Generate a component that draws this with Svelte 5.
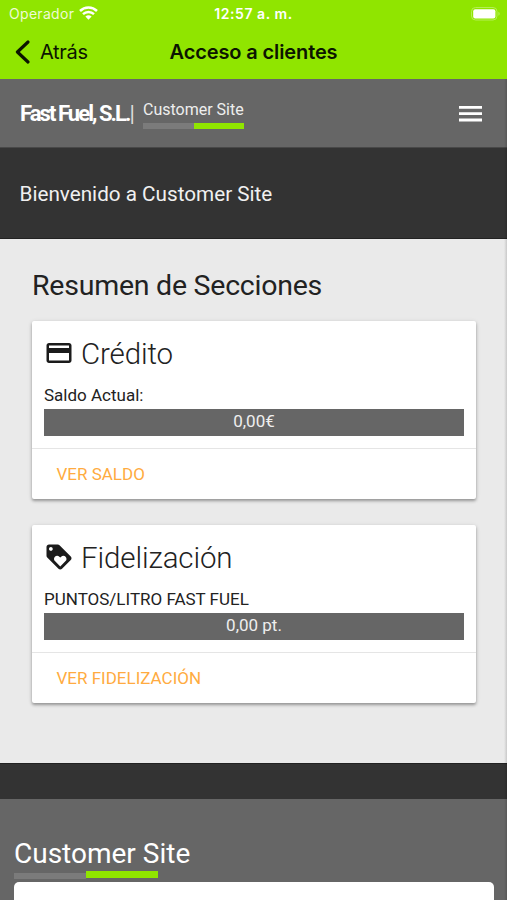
<script>
  const sections = [
    {
      title: 'Crédito',
      icon: 'M20 4H4c-1.11 0-1.99.89-1.99 2L2 18c0 1.11.89 2 2 2h16c1.11 0 2-.89 2-2V6c0-1.11-.89-2-2-2zm0 14H4v-6h16v6zm0-10H4V6h16v2z',
      label: 'Saldo Actual:',
      value: '0,00€',
      action: 'VER SALDO'
    },
    {
      title: 'Fidelización',
      icon: 'M21.41 11.58l-9-9C12.05 2.22 11.55 2 11 2H4c-1.1 0-2 .9-2 2v7c0 .55.22 1.05.59 1.42l9 9c.36.36.86.58 1.41.58.55 0 1.05-.22 1.41-.59l7-7c.37-.36.59-.86.59-1.41 0-.55-.23-1.06-.59-1.42zM5.5 7C4.67 7 4 6.33 4 5.5S4.67 4 5.5 4 7 4.67 7 5.5 6.33 7 5.5 7zm11.77 8.27L13 19.54l-4.27-4.27C8.28 14.81 8 14.19 8 13.5c0-1.38 1.12-2.5 2.5-2.5.69 0 1.32.28 1.77.74l.73.72.73-.73c.45-.45 1.08-.73 1.77-.73 1.38 0 2.5 1.12 2.5 2.5 0 .69-.28 1.32-.73 1.77z',
      label: 'PUNTOS/LITRO FAST FUEL',
      value: '0,00 pt.',
      action: 'VER FIDELIZACIÓN'
    }
  ];
</script>

<div class="screen">
  <div class="status">
    <div class="carrier">
      <span>Operador</span>
      <svg width="19" height="14" viewBox="0 0 19 14" fill="none" stroke="#fff">
        <path d="M1 5a12.2 12.2 0 0 1 17 0" stroke-width="2.5" />
        <path d="M4 8.2a7.9 7.9 0 0 1 11 0" stroke-width="2.4" />
        <path d="M9.5 13.8 6.4 10.6a4.6 4.6 0 0 1 6.2 0z" fill="#fff" stroke="none" />
      </svg>
    </div>
    <span class="time">12:57 a. m.</span>
    <svg class="battery" width="30" height="14" viewBox="0 0 30 14">
      <rect x=".5" y=".5" width="25.5" height="12.5" rx="4" fill="none" stroke="#b4ef55" />
      <rect x="2.2" y="2.2" width="22.2" height="9.2" rx="2" fill="#fff" />
      <path d="M27.4 4.8a2.2 2.2 0 0 1 0 4z" fill="#b4ef55" />
    </svg>
  </div>
  <nav class="navbar">
    <div class="back">
      <svg width="15" height="24" viewBox="0 0 15 24" fill="none" stroke="#0c1500" stroke-width="3.1" stroke-linecap="round" stroke-linejoin="round"><path d="M13 2 2.4 12 13 22" /></svg>
      <span>Atrás</span>
    </div>
    <h1>Acceso a clientes</h1>
  </nav>

  <div class="page">
    <header>
      <div class="brand"><b>Fast Fuel, S.L.</b><i>|</i></div>
      <div class="site"><span>Customer Site</span><div class="stripe"></div></div>
      <svg class="menu" width="23" height="16" viewBox="0 0 23 16" fill="#fff"><path d="M0 0h23v2.8H0zM0 6.3h23v2.8H0zM0 12.6h23v2.8H0z" /></svg>
    </header>
    <div class="welcome"><span>Bienvenido a Customer Site</span></div>
    <main>
      <h2>Resumen de Secciones</h2>
      {#each sections as s}
        <section>
          <div class="content">
            <h3>
              <svg width="30" height="30" viewBox="0 0 24 24" fill="#1b1b1b"><path d={s.icon} /></svg>
              <span>{s.title}</span>
            </h3>
            <p>{s.label}</p>
            <div class="value"><span>{s.value}</span></div>
          </div>
          <div class="action"><span>{s.action}</span></div>
        </section>
      {/each}
    </main>
    <div class="band"></div>
    <footer>
      <div class="foot-title"><span>Customer Site</span></div>
      <div class="foot-stripe"><i></i><b></b></div>
      <div class="panel"></div>
    </footer>
    <div class="edge"></div>
  </div>
</div>

<style>
  :global(body) { margin: 0; overflow: hidden; }
  .screen { width: 507px; height: 900px; overflow: hidden; display: flex; flex-direction: column; font-family: Roboto, "Liberation Sans", sans-serif; color: #222; }
  h1, h2, h3, p { margin: 0; font-weight: 400; }
  span { white-space: nowrap; }
  .status { height: 28px; flex: none; box-sizing: border-box; padding: 0 6px 0 9px; background: #90e500; color: #fff; display: grid; grid-template-columns: 1fr auto 1fr; align-items: center; font: 14px/28px Inter, sans-serif; }
  .carrier { display: flex; align-items: center; gap: 5px; color: #eefad5; letter-spacing: .3px; }
  .carrier svg { margin-top: -2px; }
  .time { font-weight: 600; letter-spacing: .55px; margin-left: -3px; }
  .battery { justify-self: end; margin-right: 0; }
  .navbar { height: 51px; flex: none; background: #90e500; color: #0c1500; display: grid; grid-template-columns: 1fr auto 1fr; align-items: center; box-sizing: border-box; padding: 0 15px 3px; font: 20px/28px Inter, sans-serif; }
  .back { display: flex; align-items: center; gap: 10px; }
  .back span { letter-spacing: -.3px; }
  h1 { font-size: 20px; font-weight: 600; letter-spacing: -.12px; }
  .page { position: relative; height: 821px; display: flex; flex-direction: column; }
  header { height: 69px; flex: none; background: #666; display: flex; align-items: center; box-sizing: border-box; padding: 0 25px 0 20px; border-bottom: 1px solid #484848; color: #fff; }
  .brand { width: 123px; flex: none; display: flex; font-size: 22px; line-height: 28px; letter-spacing: -1.95px; white-space: nowrap; padding-top: 1px; }
  .brand b { font-weight: 700; }
  .brand i { font-style: normal; margin-left: 0; color: #ddd; }
  .site { width: 101px; font-size: 16px; line-height: 20px; color: #eee; padding-top: 3px; }
  .site span { display: block; }
  .stripe { height: 6px; margin-top: 3px; background: linear-gradient(90deg, #7b7b7b 50%, #90e500 50%); }
  .menu { margin-left: auto; margin-top: 1px; }
  .welcome { height: 91px; flex: none; background: #333; color: #f0f0f0; font-size: 20.7px; line-height: 92px; padding-left: 19.5px; box-sizing: border-box; border-bottom: 1px solid #222; }
  main { height: 524px; flex: none; background: #eaeaea; box-sizing: border-box; padding: 30px 31px 0 32px; }
  h2 { height: 34px; line-height: 34px; font-size: 28.5px; letter-spacing: -.24px; margin-bottom: 18px; white-space: nowrap; }
  section { height: 178px; margin-bottom: 26px; background: #fff; border-radius: 2px; box-shadow: 0 2px 3px rgba(0,0,0,.3), 0 1px 5px rgba(0,0,0,.12); display: flex; flex-direction: column; }
  .content { height: 127px; box-sizing: border-box; padding: 13px 12px 0; }
  h3 { height: 40px; display: flex; align-items: center; gap: 7px; font-size: 29.5px; letter-spacing: -.12px; font-weight: 300; line-height: 40px; }
  h3 svg { margin-top: -2px; }
  p { height: 24px; margin-top: 11px; font-size: 17px; line-height: 21px; white-space: nowrap; }
  .value { height: 27px; background: #666; color: #eee; font-size: 17px; line-height: 25px; text-align: center; }
  .action { flex: 1; border-top: 1px solid #e5e5e5; color: #ffab40; font-size: 17px; line-height: 50px; padding-left: 24.5px; }
  .band { height: 36px; flex: none; box-sizing: border-box; background: #333; border-top: 1px solid #222; }
  footer { flex: 1; background: #666; color: #fff; padding: 35px 13px 0 14px; }
  .foot-title { font-size: 28px; line-height: 40px; height: 37px; }
  .foot-stripe { display: flex; width: 144px; height: 11px; }
  .foot-stripe i { width: 72px; height: 6px; margin-top: 2px; background: #7b7b7b; }
  .foot-stripe b { width: 72px; height: 7px; background: #90e500; }
  .panel { height: 40px; background: #fff; border-radius: 5px; }
  .edge { position: absolute; top: 0; right: 0; bottom: 0; width: 3px; background: linear-gradient(90deg, rgba(0,0,0,0), rgba(0,0,0,.14)); }
</style>
